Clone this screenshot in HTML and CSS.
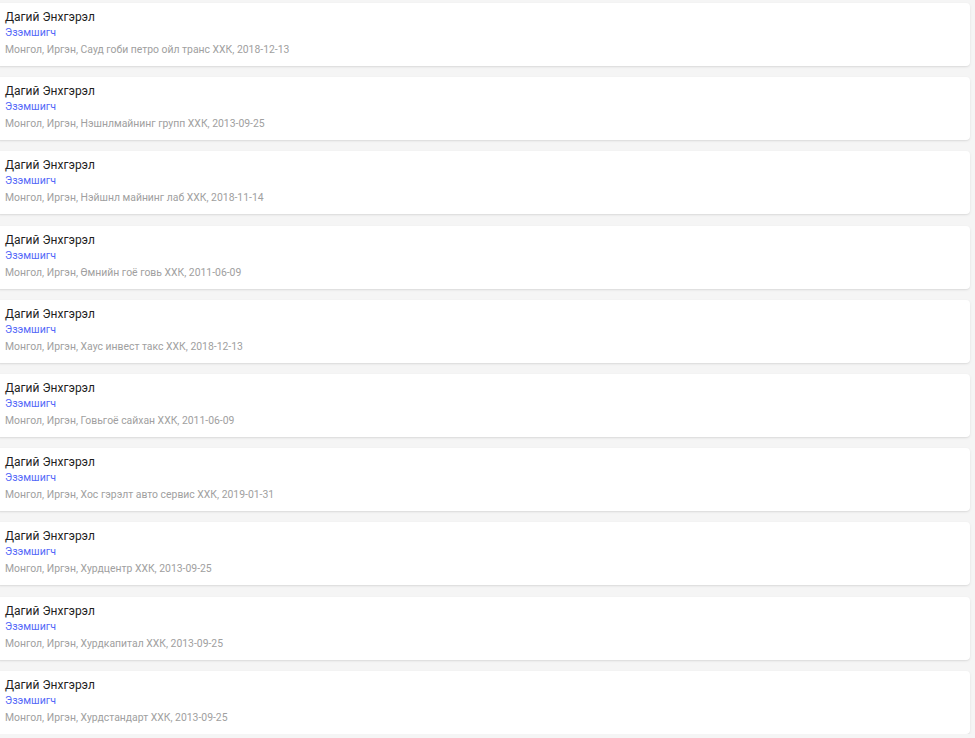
FILE: index.html
```html
<!DOCTYPE html>
<html lang="mn">
<head>
<meta charset="utf-8">
<title>Эзэмшигчид</title>
<link rel="stylesheet" href="styles.css">
</head>
<body>
<ul class="list">
  <li class="card"><div class="name">Дагий Энхгэрэл</div><div class="role">Эзэмшигч</div><div class="info">Монгол, Иргэн, Сауд гоби петро ойл транс ХХК, 2018-12-13</div></li>
  <li class="card"><div class="name">Дагий Энхгэрэл</div><div class="role">Эзэмшигч</div><div class="info">Монгол, Иргэн, Нэшнлмайнинг групп ХХК, 2013-09-25</div></li>
  <li class="card"><div class="name">Дагий Энхгэрэл</div><div class="role">Эзэмшигч</div><div class="info">Монгол, Иргэн, Нэйшнл майнинг лаб ХХК, 2018-11-14</div></li>
  <li class="card"><div class="name">Дагий Энхгэрэл</div><div class="role">Эзэмшигч</div><div class="info">Монгол, Иргэн, Өмнийн гоё говь ХХК, 2011-06-09</div></li>
  <li class="card"><div class="name">Дагий Энхгэрэл</div><div class="role">Эзэмшигч</div><div class="info">Монгол, Иргэн, Хаус инвест такс ХХК, 2018-12-13</div></li>
  <li class="card"><div class="name">Дагий Энхгэрэл</div><div class="role">Эзэмшигч</div><div class="info">Монгол, Иргэн, Говьгоё сайхан ХХК, 2011-06-09</div></li>
  <li class="card"><div class="name">Дагий Энхгэрэл</div><div class="role">Эзэмшигч</div><div class="info">Монгол, Иргэн, Хос гэрэлт авто сервис ХХК, 2019-01-31</div></li>
  <li class="card"><div class="name">Дагий Энхгэрэл</div><div class="role">Эзэмшигч</div><div class="info">Монгол, Иргэн, Хурдцентр ХХК, 2013-09-25</div></li>
  <li class="card"><div class="name">Дагий Энхгэрэл</div><div class="role">Эзэмшигч</div><div class="info">Монгол, Иргэн, Хурдкапитал ХХК, 2013-09-25</div></li>
  <li class="card"><div class="name">Дагий Энхгэрэл</div><div class="role">Эзэмшигч</div><div class="info">Монгол, Иргэн, Хурдстандарт ХХК, 2013-09-25</div></li>
</ul>
</body>
</html>
```

FILE: styles.css
```css
html, body {
  margin: 0;
  padding: 0;
  background: #f5f5f5;
  font-family: Roboto, "Liberation Sans", sans-serif;
  overflow: hidden;
}

.list {
  list-style: none;
  margin: 3px 5px 0 -4px;
  padding: 0;
  display: flex;
  flex-direction: column;
  gap: 11.2px;
}

.card {
  background: #fff;
  border-radius: 4px;
  box-shadow: 0 1px 3px rgba(0, 0, 0, 0.08), 0 1px 1px rgba(0, 0, 0, 0.04);
  height: 63px;
  box-sizing: border-box;
  padding: 6px 9px 10px;
}

.name {
  font-size: 12px;
  line-height: 16px;
  color: #1f1f1f;
}

.role {
  font-size: 10.6px;
  line-height: 14px;
  margin-top: 1px;
  color: #5468f8;
}

.info {
  font-size: 10.4px;
  line-height: 14px;
  margin-top: 3px;
  color: #a0a0a0;
}
```
